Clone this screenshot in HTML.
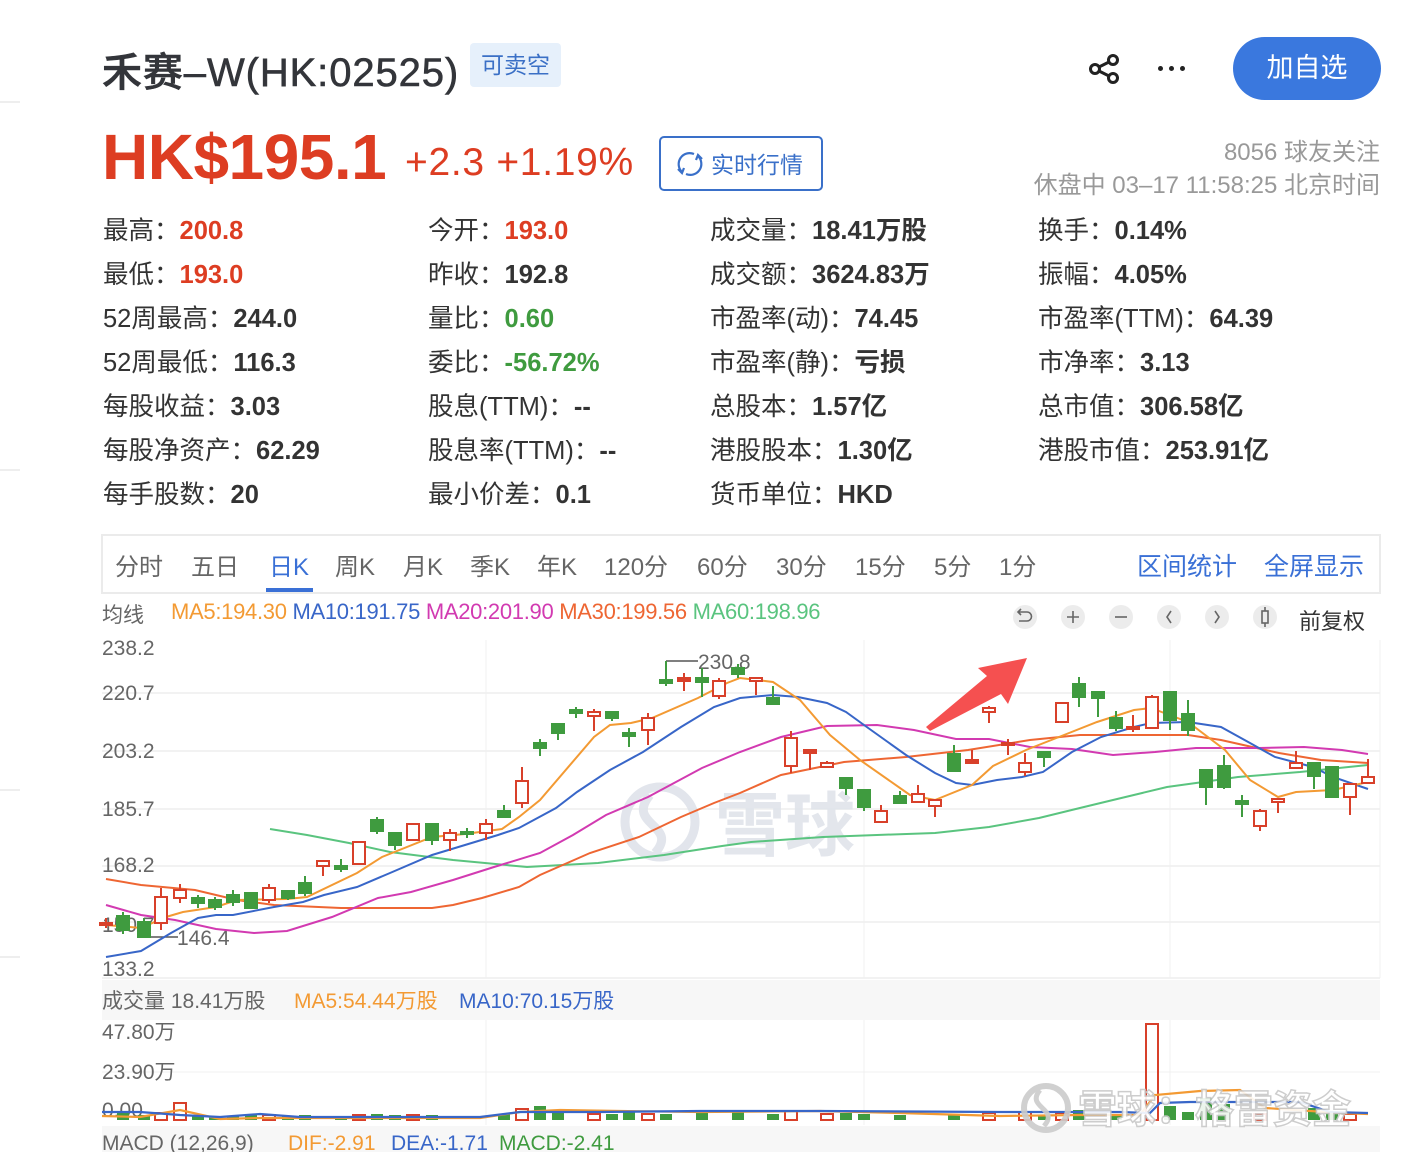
<!DOCTYPE html>
<html><head><meta charset="utf-8">
<style>
*{margin:0;padding:0;box-sizing:border-box}
body{width:1406px;height:1152px;overflow:hidden;background:#fff;font-family:"Liberation Sans","Noto Sans CJK SC",sans-serif;color:#333;position:relative}
.a{position:absolute;white-space:nowrap}
.st{font-size:25.5px;color:#333}
.st b{font-weight:bold;color:#333}
.r{color:#dd3d22!important}.g{color:#3f9b3f!important}
.tab{font-size:24px;color:#666;top:547px}
</style></head><body>
<div class="a" style="left:0;top:101px;width:20px;height:2px;background:#eee"></div>
<div class="a" style="left:0;top:469px;width:20px;height:2px;background:#eee"></div>
<div class="a" style="left:0;top:789px;width:20px;height:2px;background:#eee"></div>
<div class="a" style="left:0;top:956px;width:20px;height:2px;background:#eee"></div>

<div class="a" style="left:102px;top:40px;font-size:40px;color:#33353a;font-weight:500;-webkit-text-stroke:0.6px #33353a;letter-spacing:0.9px">禾赛–W(HK:02525)</div>
<div class="a" style="left:470px;top:43px;width:91px;height:44px;background:#e6f0fb;border-radius:4px;color:#3b70c6;font-size:23px;line-height:44px;text-align:center">可卖空</div>

<svg class="a" style="left:1086px;top:51px" width="36" height="36" viewBox="0 0 36 36"><g fill="none" stroke="#222" stroke-width="3"><circle cx="27" cy="9" r="4.5"/><circle cx="9" cy="18" r="4.5"/><circle cx="27" cy="27" r="4.5"/><path d="M13 16L23 11M13 20L23 25"/></g></svg>
<div class="a" style="left:1158px;top:66px;width:28px;height:6px"><span style="position:absolute;left:0;width:5px;height:5px;border-radius:50%;background:#222"></span><span style="position:absolute;left:11px;width:5px;height:5px;border-radius:50%;background:#222"></span><span style="position:absolute;left:22px;width:5px;height:5px;border-radius:50%;background:#222"></span></div>
<div class="a" style="left:1233px;top:37px;width:148px;height:63px;border-radius:32px;background:#3a78de;color:#fff;font-size:27px;line-height:63px;text-align:center">加自选</div>

<div class="a" style="left:102px;top:120px;font-size:64px;font-weight:bold;color:#dd3d22;letter-spacing:-0.5px">HK$195.1</div>
<div class="a" style="left:405px;top:141px;font-size:39px;color:#dd3d22;letter-spacing:0.7px">+2.3 +1.19%</div>
<div class="a" style="left:659px;top:136px;width:164px;height:55px;border:2px solid #3a70c9;border-radius:5px;color:#3a70c9;font-size:23px;line-height:55px;padding-left:50px">实时行情</div>
<svg class="a" style="left:674px;top:148px" width="32" height="32" viewBox="0 0 32 32"><g fill="none" stroke="#3a70c9" stroke-width="2.2"><path d="M20 6A11 11 0 0 0 8 24"/><path d="M12 26A11 11 0 0 0 24 8"/><path d="M4 21l4 4 2-5M28 11l-4-4-2 5"/></g></svg>

<div class="a" style="right:26px;top:132px;font-size:24px;color:#999">8056 球友关注</div>
<div class="a" style="right:26px;top:165px;font-size:24px;color:#999">休盘中 03–17 11:58:25 北京时间</div>

<div class="a st" style="left:103px;top:210px">最高：<b class="r">200.8</b></div>
<div class="a st" style="left:103px;top:254px">最低：<b class="r">193.0</b></div>
<div class="a st" style="left:103px;top:298px">52周最高：<b>244.0</b></div>
<div class="a st" style="left:103px;top:342px">52周最低：<b>116.3</b></div>
<div class="a st" style="left:103px;top:386px">每股收益：<b>3.03</b></div>
<div class="a st" style="left:103px;top:430px">每股净资产：<b>62.29</b></div>
<div class="a st" style="left:103px;top:474px">每手股数：<b>20</b></div>

<div class="a st" style="left:428px;top:210px">今开：<b class="r">193.0</b></div>
<div class="a st" style="left:428px;top:254px">昨收：<b>192.8</b></div>
<div class="a st" style="left:428px;top:298px">量比：<b class="g">0.60</b></div>
<div class="a st" style="left:428px;top:342px">委比：<b class="g">-56.72%</b></div>
<div class="a st" style="left:428px;top:386px">股息(TTM)：<b>--</b></div>
<div class="a st" style="left:428px;top:430px">股息率(TTM)：<b>--</b></div>
<div class="a st" style="left:428px;top:474px">最小价差：<b>0.1</b></div>

<div class="a st" style="left:710px;top:210px">成交量：<b>18.41万股</b></div>
<div class="a st" style="left:710px;top:254px">成交额：<b>3624.83万</b></div>
<div class="a st" style="left:710px;top:298px">市盈率(动)：<b>74.45</b></div>
<div class="a st" style="left:710px;top:342px">市盈率(静)：<b>亏损</b></div>
<div class="a st" style="left:710px;top:386px">总股本：<b>1.57亿</b></div>
<div class="a st" style="left:710px;top:430px">港股股本：<b>1.30亿</b></div>
<div class="a st" style="left:710px;top:474px">货币单位：<b>HKD</b></div>

<div class="a st" style="left:1038px;top:210px">换手：<b>0.14%</b></div>
<div class="a st" style="left:1038px;top:254px">振幅：<b>4.05%</b></div>
<div class="a st" style="left:1038px;top:298px">市盈率(TTM)：<b>64.39</b></div>
<div class="a st" style="left:1038px;top:342px">市净率：<b>3.13</b></div>
<div class="a st" style="left:1038px;top:386px">总市值：<b>306.58亿</b></div>
<div class="a st" style="left:1038px;top:430px">港股市值：<b>253.91亿</b></div>

<!-- tabs -->
<div class="a" style="left:101px;top:534px;width:1280px;height:60px;border:2px solid #ebebeb"></div>
<div class="a tab" style="left:115px">分时</div>
<div class="a tab" style="left:191px">五日</div>
<div class="a tab" style="left:269px;color:#3a70d6">日K</div>
<div class="a" style="left:266px;top:588px;width:47px;height:4px;background:#3a70d6"></div>
<div class="a tab" style="left:335px">周K</div>
<div class="a tab" style="left:403px">月K</div>
<div class="a tab" style="left:470px">季K</div>
<div class="a tab" style="left:537px">年K</div>
<div class="a tab" style="left:604px">120分</div>
<div class="a tab" style="left:697px">60分</div>
<div class="a tab" style="left:776px">30分</div>
<div class="a tab" style="left:855px">15分</div>
<div class="a tab" style="left:934px">5分</div>
<div class="a tab" style="left:999px">1分</div>
<div class="a tab" style="left:1137px;color:#3a70d6;font-size:25px">区间统计</div>
<div class="a tab" style="left:1264px;color:#3a70d6;font-size:25px">全屏显示</div>

<div class="a" style="left:102px;top:599px;font-size:21px;color:#666">均线</div>
<div class="a" style="left:171px;top:599px;font-size:22px;letter-spacing:-0.3px"><span style="color:#f39a33">MA5:194.30</span> <span style="color:#3866c8">MA10:191.75</span> <span style="color:#d23ab1">MA20:201.90</span> <span style="color:#ee6633">MA30:199.56</span> <span style="color:#5ac47f">MA60:198.96</span></div>
<div class="a" style="left:1299px;top:604px;font-size:22px;color:#333">前复权</div>

<svg class="a" style="left:0;top:0" width="1406" height="1152">
<g fill="#ececec"><circle cx="1025" cy="617" r="12"/><circle cx="1073" cy="617" r="12"/><circle cx="1121" cy="617" r="12"/><circle cx="1169" cy="617" r="12"/><circle cx="1217" cy="617" r="12"/><circle cx="1265" cy="617" r="12"/><circle cx="1358" cy="999" r="10"/><circle cx="1358" cy="1141" r="10"/></g>
<g fill="none" stroke="#666" stroke-width="1.6"><path d="M1019 612h8a4 4 0 0 1 0 9h-8M1021 609l-3 3 3 3"/><path d="M1067 617h12M1073 611v12"/><path d="M1115 617h12"/><path d="M1171 611l-4 6 4 6"/><path d="M1215 611l4 6-4 6"/><rect x="1262" y="611" width="6" height="12"/><path d="M1265 607v4M1265 623v4"/><path d="M1354 995l8 8M1362 995l-8 8M1354 1137l8 8M1362 1137l-8 8"/></g>

<!-- grid -->
<g stroke="#f2f2f2" stroke-width="2"><path d="M102 693H1380M102 751H1380M102 809H1380M102 866H1380M102 922H1380M102 978H1380"/></g>
<g stroke="#f0f0f0" stroke-width="1"><path d="M486 640V978M864 640V978M1170 640V978M1380 640V978M486 1020V1125M864 1020V1125M1170 1020V1125M102 1072H1380"/></g>
<rect x="102" y="980" width="1278" height="40" fill="#f7f7f7"/>
<rect x="102" y="1126" width="1278" height="26" fill="#f7f7f7"/>

<!-- watermark -->
<g opacity="0.9"><circle cx="660" cy="822" r="35" fill="none" stroke="#dfe3ea" stroke-width="9"/><path d="M650 795c-25 30 30 30 5 58" fill="none" stroke="#dfe3ea" stroke-width="9"/>
<text x="715" y="850" font-size="70" font-weight="bold" fill="#e0e4eb" font-family="Noto Sans CJK SC,sans-serif">雪球</text></g>

<g font-size="21" fill="#666" font-family="Liberation Sans,sans-serif">
<text x="102" y="655">238.2</text><text x="102" y="700">220.7</text><text x="102" y="758">203.2</text><text x="102" y="816">185.7</text><text x="102" y="872">168.2</text><text x="102" y="932">150.7</text><text x="102" y="976">133.2</text>
<text x="177" y="945">146.4</text><text x="698" y="669">230.8</text>
</g>
<path d="M143 937H178M666 661H698" stroke="#555" stroke-width="1.5" fill="none"/>

<!-- MAs -->
<g fill="none" stroke-width="2">
<polyline stroke="#5ac47f" points="270,829 307,835 349,843 390,852 453,860 527,867 598,863 664,855 722,846 751,842 823,837 877,835 935,833 989,827 1039,818 1084,807 1113,800 1167,787 1196,783 1238,777 1300,772 1368,765"/>
<polyline stroke="#ee6633" points="106,879 141,885 195,890 237,900 274,905 341,908 432,908 453,905 482,898 519,887 540,875 590,853 639,837 681,817 714,803 740,793 781,775 844,762 906,757 968,750 1030,740 1080,735 1188,735 1221,740 1279,753 1321,760 1368,763"/>
<polyline stroke="#d23ab1" points="106,905 141,915 175,920 216,929 254,933 287,931 332,917 378,898 411,892 453,880 494,867 540,853 573,835 606,815 648,797 702,768 740,752 781,737 827,726 877,725 914,730 956,739 989,739 1030,747 1072,749 1113,755 1155,752 1196,748 1259,748 1304,747 1342,750 1368,754"/>
<polyline stroke="#3866c8" points="106,957 141,951 171,933 198,918 216,915 233,915 274,907 303,902 324,895 357,887 390,873 432,855 498,835 519,828 556,808 577,792 610,770 643,752 681,727 714,707 740,698 773,695 798,697 827,703 846,712 864,725 906,755 935,773 956,783 972,785 997,780 1022,777 1043,772 1072,752 1101,737 1134,727 1151,723 1188,722 1221,727 1250,743 1275,757 1313,767 1333,777 1368,789"/>
<polyline stroke="#f39a33" points="106,925 141,928 166,917 183,912 216,907 237,900 287,899 307,897 357,873 382,857 432,837 465,834 502,829 519,817 540,800 594,737 610,725 631,723 652,718 698,698 727,683 740,678 773,682 800,700 830,735 860,760 910,795 935,800 972,785 993,766 1026,750 1064,735 1097,722 1134,710 1151,708 1188,722 1225,750 1250,780 1278,797 1296,792 1333,790 1368,782"/>
</g>

<!-- candles -->
<g stroke-width="2">
<g stroke="#3f9b3f" fill="#3f9b3f">
<path d="M123 912V934M144 918V938M198 895V908M215 897V910M233 890V906M251 893V908M288 891V900M305 876V896M341 859V872M377 817V834M395 833V850M432 824V845M467 828V838M504 805V818M540 739V756M558 724V740M576 707V718M612 712V721M629 728V747M666 661V686M702 668V697M738 664V678M773 686V704M846 778V795M864 790V811M900 791V803M954 745V771M1044 752V767M1079 677V707M1098 692V717M1116 711V731M1170 692V730M1188 700V736M1206 770V805M1224 755V789M1242 795V817M1314 763V789M1332 767V798"/>
<rect x="117" y="916" width="12" height="14"/><rect x="138" y="922" width="12" height="15"/><rect x="192" y="898" width="12" height="5"/><rect x="209" y="900" width="12" height="7"/><rect x="227" y="895" width="12" height="7"/><rect x="245" y="893" width="12" height="15"/><rect x="282" y="891" width="12" height="7"/><rect x="299" y="883" width="12" height="10"/><rect x="335" y="866" width="12" height="3"/><rect x="371" y="820" width="12" height="11"/><rect x="389" y="833" width="12" height="12"/><rect x="426" y="824" width="12" height="16"/><rect x="461" y="832" width="12" height="2"/><rect x="498" y="811" width="12" height="6"/><rect x="534" y="743" width="12" height="5"/><rect x="552" y="724" width="12" height="9"/><rect x="570" y="710" width="12" height="3"/><rect x="606" y="712" width="12" height="6"/><rect x="623" y="733" width="12" height="3"/><rect x="660" y="680" width="12" height="3"/><rect x="696" y="678" width="12" height="4"/><rect x="732" y="668" width="12" height="6"/><rect x="767" y="698" width="12" height="6"/><rect x="840" y="778" width="12" height="10"/><rect x="858" y="790" width="12" height="17"/><rect x="894" y="796" width="12" height="7"/><rect x="948" y="754" width="12" height="17"/><rect x="1038" y="752" width="12" height="5"/><rect x="1073" y="684" width="12" height="13"/><rect x="1092" y="692" width="12" height="6"/><rect x="1110" y="718" width="12" height="10"/><rect x="1164" y="692" width="12" height="28"/><rect x="1182" y="714" width="12" height="16"/><rect x="1200" y="770" width="12" height="17"/><rect x="1218" y="766" width="12" height="21"/><rect x="1236" y="801" width="12" height="3"/><rect x="1308" y="763" width="12" height="13"/><rect x="1326" y="767" width="12" height="30"/>
</g>
<g stroke="#d8402a" fill="#fff">
<path d="M161 888V930M180 884V903M269 884V903M323 861V876M359 841V864M413 824V840M450 829V851M486 819V840M522 767V808M594 709V731M648 713V745M684 673V691M719 678V699M756 677V695M791 731V773M810 749V770M827 761V767M881 805V822M918 785V802M935 800V817M972 750V763M989 706V723M1008 739V755M1025 753V776M1062 703V722M1133 715V732M1152 695V728M1260 809V831M1278 799V813M1296 751V768M1350 784V815M1368 759V783M106 918V928"/>
<rect x="100" y="923" width="12" height="2" fill="#d8402a"/><rect x="155" y="897" width="12" height="26"/><rect x="174" y="890" width="12" height="8"/><rect x="263" y="888" width="12" height="12"/><rect x="317" y="861" width="12" height="5"/><rect x="353" y="842" width="12" height="22"/><rect x="407" y="824" width="12" height="16"/><rect x="444" y="833" width="12" height="7"/><rect x="480" y="824" width="12" height="9"/><rect x="516" y="781" width="12" height="22"/><rect x="588" y="712" width="12" height="4"/><rect x="642" y="718" width="12" height="12"/><rect x="678" y="678" width="12" height="3" fill="#d8402a"/><rect x="713" y="681" width="12" height="15"/><rect x="750" y="678" width="12" height="3"/><rect x="785" y="738" width="12" height="28"/><rect x="804" y="750" width="12" height="3" fill="#d8402a"/><rect x="821" y="763" width="12" height="4"/><rect x="875" y="811" width="12" height="11"/><rect x="912" y="794" width="12" height="8"/><rect x="929" y="800" width="12" height="6"/><rect x="966" y="760" width="12" height="3" fill="#d8402a"/><rect x="983" y="708" width="12" height="4"/><rect x="1002" y="743" width="12" height="2"/><rect x="1019" y="763" width="12" height="9"/><rect x="1056" y="703" width="12" height="19"/><rect x="1127" y="727" width="12" height="2"/><rect x="1146" y="697" width="12" height="31"/><rect x="1254" y="811" width="12" height="15"/><rect x="1272" y="799" width="12" height="3"/><rect x="1290" y="763" width="12" height="5"/><rect x="1344" y="784" width="12" height="13"/><rect x="1362" y="777" width="12" height="6"/>
</g>
</g>

<!-- arrow -->
<path d="M926 727L987 676L978 668L1027 658L1008 704L1001 694L930 731Z" fill="#f55050"/>

<!-- volume -->
<g font-size="21" fill="#666"><text x="102" y="1008">成交量 18.41万股</text><text x="102" y="1039">47.80万</text><text x="102" y="1079">23.90万</text><text x="102" y="1117">0.00</text><text x="102" y="1150">MACD (12,26,9)</text></g>
<text x="294" y="1008" font-size="21" fill="#f39a33">MA5:54.44万股</text>
<text x="459" y="1008" font-size="21" fill="#3866c8">MA10:70.15万股</text>
<text x="288" y="1150" font-size="21" fill="#f39a33">DIF:-2.91</text>
<text x="391" y="1150" font-size="21" fill="#3866c8">DEA:-1.71</text>
<text x="499" y="1150" font-size="21" fill="#3f9b3f">MACD:-2.41</text>

<g fill="#3f9b3f"><rect x="117" y="1113" width="12" height="7"/><rect x="138" y="1115" width="12" height="5"/><rect x="192" y="1115" width="12" height="5"/><rect x="209" y="1116" width="12" height="4"/><rect x="227" y="1116" width="12" height="4"/><rect x="245" y="1114" width="12" height="6"/><rect x="282" y="1116" width="12" height="4"/><rect x="299" y="1115" width="12" height="5"/><rect x="335" y="1116" width="12" height="4"/><rect x="371" y="1114" width="12" height="6"/><rect x="389" y="1115" width="12" height="5"/><rect x="426" y="1115" width="12" height="5"/><rect x="498" y="1114" width="12" height="6"/><rect x="534" y="1106" width="12" height="14"/><rect x="552" y="1113" width="12" height="7"/><rect x="606" y="1114" width="12" height="6"/><rect x="623" y="1112" width="12" height="8"/><rect x="660" y="1114" width="12" height="6"/><rect x="696" y="1113" width="12" height="7"/><rect x="732" y="1111" width="12" height="9"/><rect x="767" y="1114" width="12" height="6"/><rect x="840" y="1113" width="12" height="7"/><rect x="858" y="1114" width="12" height="6"/><rect x="894" y="1115" width="12" height="5"/><rect x="948" y="1115" width="12" height="5"/><rect x="1038" y="1115" width="12" height="5"/><rect x="1073" y="1110" width="12" height="10"/><rect x="1110" y="1114" width="12" height="6"/><rect x="1164" y="1106" width="12" height="14"/><rect x="1182" y="1112" width="12" height="8"/><rect x="1200" y="1098" width="12" height="22"/><rect x="1218" y="1104" width="12" height="16"/><rect x="1308" y="1108" width="12" height="12"/><rect x="1326" y="1112" width="12" height="8"/></g>
<g fill="none" stroke="#d8402a" stroke-width="2"><rect x="174" y="1103" width="12" height="17"/><rect x="155" y="1113" width="12" height="7"/><rect x="263" y="1115" width="12" height="5"/><rect x="353" y="1115" width="12" height="5"/><rect x="407" y="1115" width="12" height="5"/><rect x="516" y="1109" width="12" height="11"/><rect x="588" y="1114" width="12" height="6"/><rect x="642" y="1114" width="12" height="6"/><rect x="785" y="1111" width="12" height="9"/><rect x="821" y="1114" width="12" height="6"/><rect x="983" y="1113" width="12" height="7"/><rect x="1019" y="1112" width="12" height="8"/><rect x="1056" y="1113" width="12" height="7"/><rect x="1146" y="1024" width="12" height="96"/><rect x="1254" y="1114" width="12" height="6"/><rect x="1344" y="1114" width="12" height="6"/></g>
<g fill="none" stroke-width="2.2">
<polyline stroke="#f39a33" points="102,1116 140,1117 180,1110 220,1119 260,1118 300,1118 480,1118 520,1112 560,1110 620,1111 700,1112 820,1111 900,1113 1000,1116 1080,1115 1140,1115 1155,1095 1200,1091 1240,1090 1265,1108 1340,1113 1368,1114"/>
<polyline stroke="#3866c8" points="102,1112 140,1112 180,1115 220,1117 260,1114 300,1117 480,1117 520,1112 600,1112 700,1111 820,1111 1000,1112 1120,1112 1150,1113 1160,1103 1190,1102 1300,1102 1330,1112 1368,1113"/>
</g>
<g opacity="0.9"><circle cx="1046" cy="1108" r="22" fill="none" stroke="#ccc" stroke-width="6"/><path d="M1040 1090c-15 18 20 18 4 36" fill="none" stroke="#ccc" stroke-width="5"/>
<text x="1078" y="1123" font-size="39" font-weight="bold" fill="#fff" stroke="#c8c8c8" stroke-width="1.5" font-family="Noto Sans CJK SC,sans-serif">雪球：格雷资金</text></g>
</svg>
</body></html>
